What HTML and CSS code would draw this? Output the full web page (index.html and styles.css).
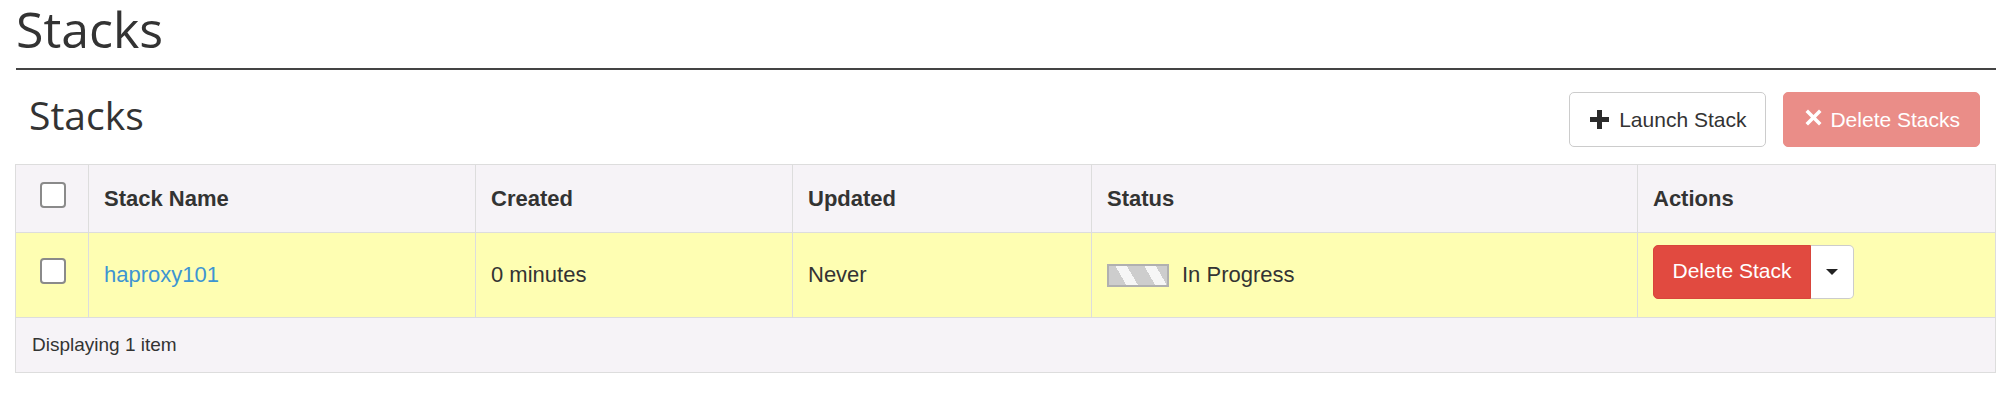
FILE: index.html
```html
<!DOCTYPE html>
<html lang="en">
<head>
    <meta charset="UTF-8">
    <meta name="viewport" content="width=device-width, initial-scale=1.0">
    <title>Stacks</title>
    <link rel="stylesheet" href="styles.css">
</head>
<body>
    <div class="page-header">
        <h1>Stacks</h1>
    </div>

    <div class="table-bar">
        <h2>Stacks</h2>
        <div class="table-actions">
            <button class="btn btn-default">
                <svg class="icon" width="19" height="19" viewBox="0 0 19 19"><path d="M7 0h5v7h7v5h-7v7h-5v-7h-7v-5h7z" fill="#2b2b2b"/></svg>
                Launch Stack
            </button>
            <button class="btn btn-danger disabled">
                <svg class="icon icon-x" width="17" height="17" viewBox="0 0 17 17"><path d="M3 0.5l5.5 5.5 5.5-5.5 2.5 2.5-5.5 5.5 5.5 5.5-2.5 2.5-5.5-5.5-5.5 5.5-2.5-2.5 5.5-5.5-5.5-5.5z" fill="#fff"/></svg>
                Delete Stacks
            </button>
        </div>
    </div>

    <table class="data-table">
        <colgroup>
            <col style="width: 73px">
            <col style="width: 387px">
            <col style="width: 317px">
            <col style="width: 299px">
            <col style="width: 546px">
            <col style="width: 358px">
        </colgroup>
        <thead>
            <tr>
                <th class="check-cell"><span class="checkbox"></span></th>
                <th>Stack Name</th>
                <th>Created</th>
                <th>Updated</th>
                <th>Status</th>
                <th>Actions</th>
            </tr>
        </thead>
        <tbody>
            <tr class="status-unknown">
                <td class="check-cell"><span class="checkbox"></span></td>
                <td><a href="#">haproxy101</a></td>
                <td>0 minutes</td>
                <td>Never</td>
                <td><span class="progress-bar"></span>In Progress</td>
                <td>
                    <div class="btn-group">
                        <button class="btn-row-danger">Delete Stack</button>
                        <button class="btn-caret"><span class="caret"></span></button>
                    </div>
                </td>
            </tr>
        </tbody>
        <tfoot>
            <tr>
                <td colspan="6">Displaying 1 item</td>
            </tr>
        </tfoot>
    </table>
</body>
</html>
```

FILE: styles.css
```css
* {
    box-sizing: border-box;
}

body {
    margin: 0;
    font-family: 'Liberation Sans', Arial, sans-serif;
    font-size: 22px;
    color: #333;
    background: #fff;
}

.page-header {
    margin: 0 12px 0 16px;
    padding: 2px 0 11px;
    border-bottom: 2px solid #444;
}

.page-header h1 {
    margin: 0;
    font-family: 'Open Sans', sans-serif;
    font-size: 50px;
    font-weight: normal;
    line-height: 55px;
    color: #333;
}

.table-bar {
    display: flex;
    justify-content: space-between;
    align-items: flex-start;
    margin: 22px 28px 0 29px;
}

.table-bar h2 {
    margin: 0;
    font-family: 'Open Sans', sans-serif;
    font-size: 39px;
    font-weight: normal;
    line-height: 45px;
    color: #333;
}

.table-actions {
    display: flex;
    gap: 17px;
}

.btn {
    display: inline-flex;
    align-items: center;
    height: 55px;
    padding: 0 19px 0 20px;
    font-family: 'Liberation Sans', Arial, sans-serif;
    font-size: 21px;
    white-space: nowrap;
    border-radius: 5px;
    border: 1px solid #ccc;
    cursor: pointer;
}

.btn .icon {
    margin-right: 10px;
}

.btn-default {
    background: #fff;
    color: #333;
}

.btn-danger {
    padding-left: 21px;
    background: #ea8d88;
    border-color: #ea8d88;
    color: #fff;
}

.btn-danger .icon-x {
    margin-right: 8px;
    margin-bottom: 5px;
}

.data-table {
    width: 1980px;
    margin: 17px 0 0 15px;
    border-collapse: collapse;
    table-layout: fixed;
    border: 1px solid #ddd;
}

.data-table th,
.data-table td {
    padding: 0 15px;
    border: 1px solid #ddd;
    text-align: left;
    vertical-align: middle;
}

.data-table thead th {
    height: 68px;
    background: #f6f3f7;
    font-weight: bold;
}

.data-table tbody td {
    height: 85px;
    background: #fefeb2;
}

.data-table tfoot td {
    height: 55px;
    padding-left: 16px;
    background: #f6f3f7;
    font-size: 19px;
}

.data-table .check-cell {
    padding: 0 0 0 24px;
}

.checkbox {
    display: block;
    width: 26px;
    height: 26px;
    margin-bottom: 8px;
    background: #fff;
    border: 2px solid #8a8a8a;
    border-radius: 4px;
}

.data-table a {
    color: #3d95d2;
    text-decoration: none;
}

.progress-bar {
    display: inline-block;
    width: 62px;
    height: 23px;
    margin-right: 13px;
    vertical-align: -5px;
    border: 2px solid #b0b0b0;
    background: repeating-linear-gradient(60deg, #cdcdcd 0, #cdcdcd 15px, #f6f6f6 15px, #f6f6f6 25px);
}

.btn-group {
    display: flex;
    height: 54px;
    margin-bottom: 7px;
}

.btn-row-danger {
    width: 158px;
    padding: 0 0 2px 0;
    background: #e14a40;
    color: #fff;
    border: 1px solid #d8453b;
    border-radius: 5px 0 0 5px;
    font-family: 'Liberation Sans', Arial, sans-serif;
    font-size: 21px;
    cursor: pointer;
}

.btn-caret {
    display: flex;
    align-items: center;
    justify-content: center;
    width: 43px;
    padding: 0;
    background: #fff;
    border: 1px solid #ccc;
    border-left: none;
    border-radius: 0 5px 5px 0;
    cursor: pointer;
}

.caret {
    width: 0;
    height: 0;
    border-left: 6px solid transparent;
    border-right: 6px solid transparent;
    border-top: 6px solid #222;
}
```
